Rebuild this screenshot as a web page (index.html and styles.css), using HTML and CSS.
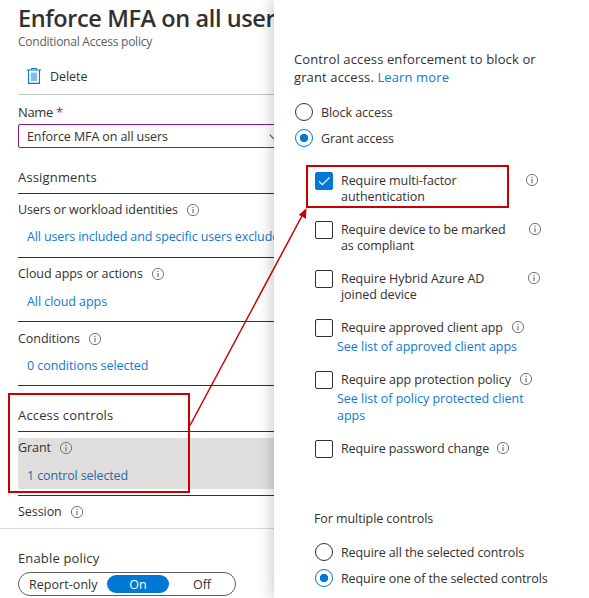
FILE: index.html
```
<!DOCTYPE html>
<html lang="en">
<head>
<meta charset="utf-8">
<title>Conditional Access policy</title>
<link rel="stylesheet" href="styles.css">
</head>
<body>
<svg class="defs" width="0" height="0" aria-hidden="true">
  <symbol id="info" viewBox="0 0 14 14">
    <circle cx="7" cy="7" r="5.6" fill="none" stroke="#777573" stroke-width="1"/>
    <path d="M7 6v4.2M7 3.8v1.2" stroke="#777573" stroke-width="1.2" fill="none"/>
  </symbol>
</svg>
<div class="app">
  <main class="policy">
    <div class="policy-body">
      <h1 class="title">Enforce MFA on all users</h1>
      <p class="subtitle">Conditional Access policy</p>
      <div class="toolbar">
        <svg class="trash" width="16" height="18" viewBox="0 0 16 18">
          <path d="M1 3h14M2.5 3v13.4h11V3" fill="none" stroke="#0078d4" stroke-width="1.1"/>
          <path d="M5.5 2.8V1.4h5v1.4" fill="none" stroke="#0078d4" stroke-width="1"/>
          <path d="M4.8 5.6h6.4v8.4H4.8z" fill="#83bbe9"/>
        </svg>
        <span class="t-delete">Delete</span>
      </div>
      <label class="name-label">Name <span class="required">*</span></label>
      <div class="name-input">
        <span>Enforce MFA on all users</span>
        <svg width="10" height="6" viewBox="0 0 10 6"><path d="M.7.7 5 5 9.3.7" fill="none" stroke="#555" stroke-width="1.1"/></svg>
      </div>

      <h2 class="group-title assignments">Assignments</h2>
      <section class="setting">
        <div class="setting-head t-tight">Users or workload identities<svg class="info"><use href="#info"/></svg></div>
        <a class="setting-link users-link">All users included and specific users excluded</a>
      </section>
      <section class="setting">
        <div class="setting-head">Cloud apps or actions<svg class="info"><use href="#info"/></svg></div>
        <a class="setting-link">All cloud apps</a>
      </section>
      <section class="setting">
        <div class="setting-head conditions">Conditions<svg class="info"><use href="#info"/></svg></div>
        <a class="setting-link">0 conditions selected</a>
      </section>

      <h2 class="group-title controls">Access controls</h2>
      <section class="setting selected">
        <div class="setting-fill">
          <div class="setting-head">Grant<svg class="info"><use href="#info"/></svg></div>
          <a class="setting-link t-tight">1 control selected</a>
        </div>
      </section>
      <div class="setting-head session">Session<svg class="info"><use href="#info"/></svg></div>
    </div>
    <footer class="enable">
      <div class="enable-label">Enable policy</div>
      <div class="toggle"><span class="report">Report-only</span><span class="on">On</span><span class="off">Off</span></div>
    </footer>
  </main>

  <aside class="grant-panel">
    <p class="intro">Control access enforcement to block or<br>grant access. <a>Learn more</a></p>
    <div class="radio"><i class="dot"></i><span>Block access</span></div>
    <div class="radio"><i class="dot checked"></i><span class="t-tight">Grant access</span></div>

    <div class="options">
      <div class="option two-line">
        <i class="box checked"><svg width="18" height="18" viewBox="0 0 18 18"><path d="M4 9.4l3.3 3.3 7.2-7.2" fill="none" stroke="#fff" stroke-width="1.1"/></svg></i>
        <span class="label w-mfa">Require multi-factor<br>authentication</span>
        <svg class="info"><use href="#info"/></svg>
      </div>
      <div class="option two-line">
        <i class="box"></i>
        <span class="label w-device">Require device to be marked<br>as compliant</span>
        <svg class="info"><use href="#info"/></svg>
      </div>
      <div class="option two-line">
        <i class="box"></i>
        <span class="label w-hybrid">Require Hybrid Azure AD<br>joined device</span>
        <svg class="info"><use href="#info"/></svg>
      </div>
      <div class="option approved">
        <i class="box"></i>
        <span class="label w-approved">Require approved client app</span>
        <svg class="info"><use href="#info"/></svg>
        <a class="option-link">See list of approved client apps</a>
      </div>
      <div class="option protection">
        <i class="box"></i>
        <span class="label w-protection">Require app protection policy</span>
        <svg class="info"><use href="#info"/></svg>
        <a class="option-link">See list of policy protected client<br>apps</a>
      </div>
      <div class="option password">
        <i class="box"></i>
        <span class="label w-password">Require password change</span>
        <svg class="info"><use href="#info"/></svg>
      </div>
      <div class="multiple">For multiple controls</div>
      <div class="radio"><i class="dot"></i><span class="t-multi">Require all the selected controls</span></div>
      <div class="radio"><i class="dot checked"></i><span class="t-multi">Require one of the selected controls</span></div>
    </div>
  </aside>

  <svg class="callouts" width="589" height="598" viewBox="0 0 589 598">
    <g fill="none" stroke="#c80000">
      <rect x="9" y="394" width="180" height="98" stroke-width="2"/>
      <rect x="307" y="166" width="201" height="41" stroke-width="2"/>
      <path d="M190 425.500L303 214" stroke-width="1.5"/>
    </g>
    <path d="M306.500 208L305.900 219L302.500 216.500L298.700 215Z" fill="#c80000"/>
  </svg>
</div>
</body>
</html>
```
FILE: styles.css
```
* { box-sizing: border-box; }
body {
  margin: 0;
  background: #fff;
  color: #323130;
  font: 12.5px/18px "Open Sans", "Noto Sans", sans-serif;
  letter-spacing: -0.06px;
}
h1, h2, p { margin: 0; font-weight: 400; }
a { color: #0f78d4; text-decoration: none; }
i { display: block; }
.defs, .callouts { position: absolute; top: 0; left: 0; }
.app { position: relative; display: flex; width: 589px; height: 598px; overflow: hidden; }
.t-tight { letter-spacing: -0.13px; }
.t-multi { letter-spacing: -0.1px; }
.info { width: 14px; height: 14px; flex: none; }

.policy { width: 274px; height: 598px; overflow: hidden; white-space: nowrap; }
.policy-body { height: 529px; padding-left: 18px; border-bottom: 1px solid #dddcdb; }
.title { height: 32px; padding-top: 2px; font-size: 23.5px; line-height: 32px; font-weight: 600; letter-spacing: -0.4px; }
.subtitle { height: 26px; padding-top: 1px; font-size: 12px; letter-spacing: -0.24px; color: #605e5c; }
.toolbar { display: flex; align-items: center; gap: 8px; height: 37px; padding-left: 8px; border-bottom: 1px solid #c8c6c4; }
.t-delete { padding-top: 2px; }
.name-label { display: block; height: 29px; padding-top: 8px; font-size: 13px; letter-spacing: -0.35px; }
.required { color: #a4262c; }
.name-input {
  display: flex; align-items: center; justify-content: space-between;
  width: 270px; height: 24px; padding: 2px 8px 0 8px;
  border: 1px solid #881798; border-radius: 2px; letter-spacing: -0.1px;
}
.group-title { height: 46px; padding-top: 20px; font-size: 13px; line-height: 18px; letter-spacing: 0.16px; border-bottom: 1px solid #323130; }
.setting { height: 64px; border-bottom: 1px solid #323130; }
.setting-head { display: flex; align-items: center; gap: 8px; height: 30px; padding-top: 2px; }
.conditions { padding-top: 4px; }
.setting-link { display: block; height: 24px; padding: 5px 0 0 9px; }
.users-link { padding-top: 4px; letter-spacing: -0.12px; }
.selected { padding-top: 6px; }
.setting-fill { height: 51px; background: #e1dfdd; }
.setting-fill .setting-head { height: 22px; padding: 0 0 2px; }
.setting-fill .setting-link { padding-top: 7px; color: #1f69ad; }
.session { padding-top: 2px; }
.enable { padding: 20px 0 0 18px; }
.enable-label { height: 23px; font-size: 13px; letter-spacing: 0.15px; }
.toggle { display: flex; align-items: center; width: 218px; height: 24px; padding-left: 10px; border: 1px solid #605e5c; border-radius: 12px; }
.report { width: 78px; padding-top: 1px; letter-spacing: 0.05px; }
.on { width: 62px; height: 18px; border-radius: 9px; background: #0078d4; color: #fff; text-align: center; line-height: 19px; }
.off { width: 66px; padding-top: 1px; text-align: center; }

.grant-panel { position: relative; width: 315px; height: 598px; padding: 50px 0 0 20px; background: #fff; box-shadow: 0 0 16px rgba(0, 0, 0, 0.27); white-space: nowrap; }
.intro { height: 49px; font-size: 13px; letter-spacing: 0.12px; }
.radio { display: flex; align-items: center; gap: 8px; height: 26px; padding-left: 1px; }
.radio span { padding-top: 2px; }
.dot { width: 18px; height: 18px; border: 1px solid #323130; border-radius: 50%; }
.dot.checked { border: 1px solid #0078d4; background: radial-gradient(circle, #0078d4 3.8px, transparent 4.5px); }
.options { padding: 21px 0 0 20px; }
.option { display: grid; grid-template-columns: 26px auto 14px; justify-content: start; align-items: start; align-content: start; padding-left: 1px; line-height: 16px; }
.option .info { margin-top: 1px; }
.label { padding-top: 1px; }
.two-line { height: 49px; }
.box { width: 18px; height: 18px; border: 1px solid #323130; border-radius: 2px; }
.box.checked { border-color: #0078d4; background: #0078d4; }
.box.checked svg { display: block; margin: -1px; }
.w-mfa { width: 184px; }
.w-device { width: 187px; letter-spacing: -0.09px; }
.w-hybrid { width: 186px; }
.w-approved { width: 170px; letter-spacing: -0.1px; }
.w-protection { width: 178px; }
.w-password { width: 155px; letter-spacing: -0.1px; }
.option-link { grid-column: 1 / -1; padding: 1px 0 0 22px; line-height: 17px; letter-spacing: -0.03px; }
.approved { height: 52px; }
.protection { height: 69px; }
.password { height: 69px; }
.multiple { height: 30px; padding-top: 1px; letter-spacing: -0.08px; }
```
